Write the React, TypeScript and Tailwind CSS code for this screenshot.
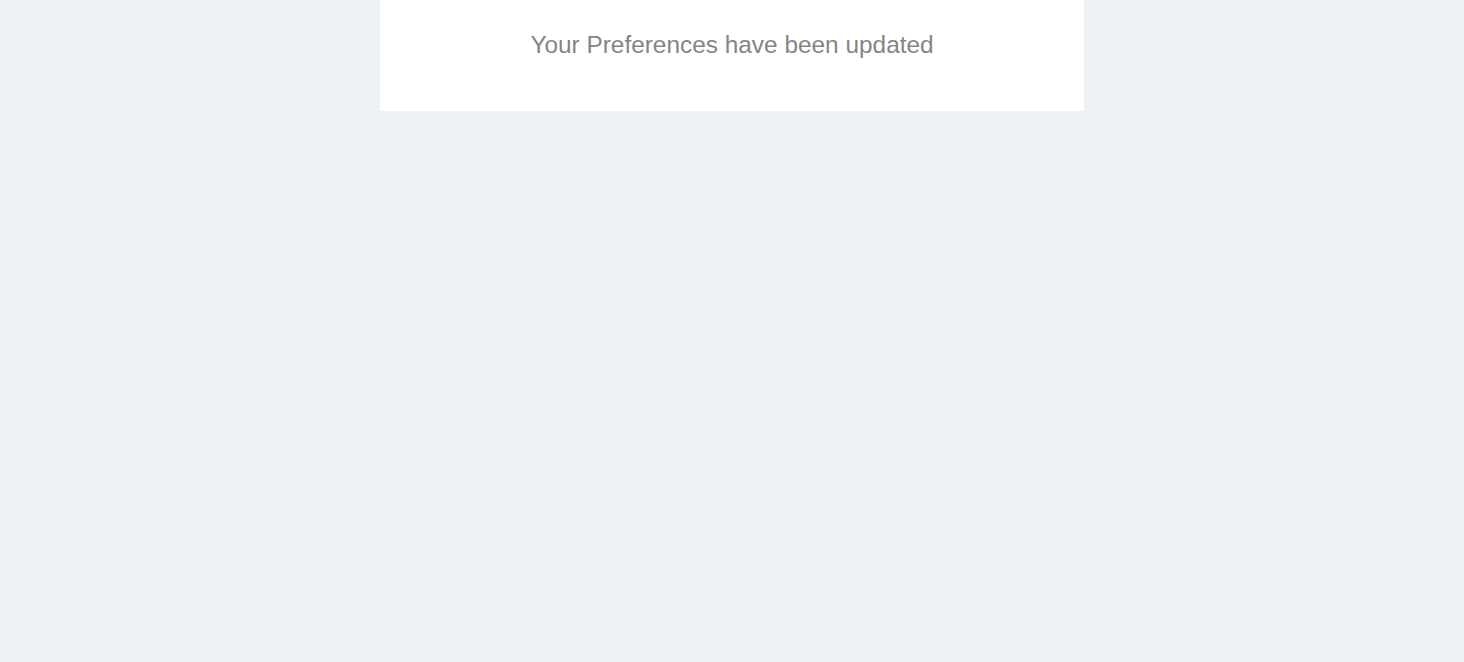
export default function App() {
  return (
    <div className="min-h-[662px] w-full bg-[#eef2f5] flex justify-center" style={{ fontFamily: '"Liberation Sans", Arial, sans-serif' }}>
      <div className="w-[704px] h-[111px] bg-white flex justify-center pt-[29px]">
        <p className="text-[24.4px] leading-[31px] text-[#858585]">Your Preferences have been updated</p>
      </div>
    </div>
  );
}
